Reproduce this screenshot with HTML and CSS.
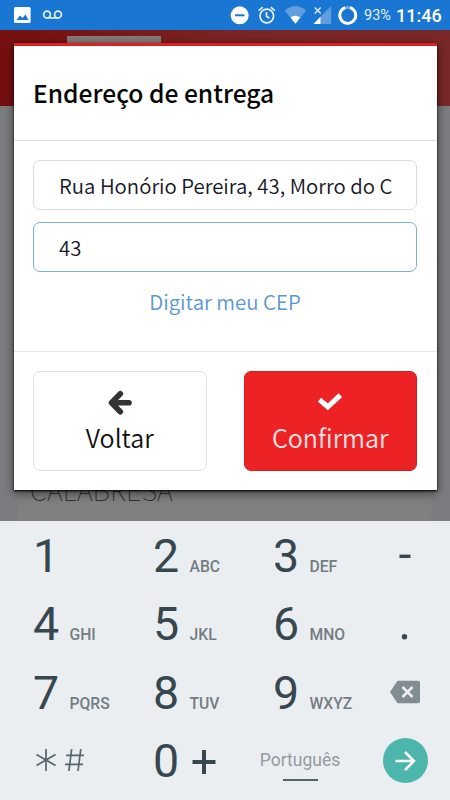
FILE: index.html
```html
<!DOCTYPE html>
<html lang="pt-BR">
<head>
  <meta charset="UTF-8" />
  <meta name="viewport" content="width=device-width, initial-scale=1.0"/>
  <title>Endereço de entrega</title>
  <link rel="stylesheet" href="styles.css">
</head>
<body>
  <div class="status-bar">
    <svg class="status-left" width="70" height="30" viewBox="0 0 70 30">
      <rect x="14" y="7" width="16.600" height="16" rx="1.500" fill="#fff"/>
      <path d="M16.500 20l3.500-4.500 2.500 2.500 3-3.500 3 5.500z" fill="#1976d2"/>
      <g fill="none" stroke="#e4effa" stroke-width="1.700">
        <circle cx="47" cy="14.500" r="3.400"/>
        <circle cx="58" cy="14.500" r="3.400"/>
        <path d="M47 17.900h11"/>
      </g>
    </svg>
    <svg class="status-icons" width="135" height="30" viewBox="225 0 135 30">
      <circle cx="239.700" cy="15.300" r="9" fill="#fff"/>
      <path d="M235 15.300h9.500" stroke="#1976d2" stroke-width="2"/>
      <g fill="none" stroke="#e8f1fb" stroke-width="1.700">
        <circle cx="266.800" cy="16" r="6.800"/>
        <path d="M266.500 12v4.300l3 2M258.700 10.700l4-3.500M274.800 10.700l-4-3.500"/>
      </g>
      <path d="M284.700 10.500Q295.400 1.500 306.200 10.500L295.400 23.800z" fill="#629fdf"/>
      <path d="M290.500 17.500Q295.400 13.800 300.300 17.500L295.400 23.800z" fill="#fff"/>
      <path d="M331.200 6v18H313.500z" fill="#5f9ddd"/>
      <path d="M320.500 16.800V24h-7z" fill="#fff"/>
      <path d="M314.700 7.500l6 6M320.700 7.500l-6 6" stroke="#e8f1fb" stroke-width="1.300"/>
      <circle cx="347.800" cy="15.300" r="8" fill="none" stroke="#75abe2" stroke-width="2.800"/>
      <path d="M350 7.600A8 8 0 1 1 345.200 7.700" fill="none" stroke="#fff" stroke-width="2.800"/>
    </svg>
    <span class="battery">93%</span>
    <span class="clock">11:46</span>
  </div>

  <div class="page">
    <div class="page-header"><div class="page-logo"></div></div>
    <div class="page-content">
      <div class="product">CALABRESA</div>
    </div>

    <div class="modal">
      <div class="modal-header"><h2>Endereço de entrega</h2></div>
      <div class="modal-body">
        <div class="field"><span class="address">Rua Honório Pereira, 43, Morro do C</span></div>
        <div class="field focused"><span class="number">43</span></div>
        <a class="cep-link" href="#"><span>Digitar meu CEP</span></a>
      </div>
      <div class="modal-footer">
        <button class="btn btn-back">
          <svg width="24" height="26" viewBox="0 0 24 26">
            <path d="M12.800 4.300L4 13.300l8.800 9M5 13.300h16.500" fill="none" stroke="#333" stroke-width="5.600" stroke-linecap="round" stroke-linejoin="round" transform="translate(-.5 .5)"/>
          </svg>
          <span>Voltar</span>
        </button>
        <button class="btn btn-confirm">
          <svg width="24" height="26" viewBox="0 0 24 26">
            <path d="M2.500 12.300L9.500 18.300 21.500 7.300" fill="none" stroke="#fff" stroke-width="5.600" stroke-linecap="square"  transform="translate(1.200 1.300) scale(.9)"/>
          </svg>
          <span>Confirmar</span>
        </button>
      </div>
    </div>
  </div>

  <div class="keypad">
    <div class="key"><b>1</b></div>
    <div class="key"><b>2</b><i>ABC</i></div>
    <div class="key"><b>3</b><i>DEF</i></div>
    <div class="key side"><svg width="12" height="46" viewBox="0 0 12 46"><path d="M.5 24.300h11" stroke="#37474f" stroke-width="3.400"/></svg></div>

    <div class="key"><b>4</b><i>GHI</i></div>
    <div class="key"><b>5</b><i>JKL</i></div>
    <div class="key"><b>6</b><i>MNO</i></div>
    <div class="key side"><svg width="12" height="46" viewBox="0 0 12 46"><circle cx="5.500" cy="36.800" r="2.700" fill="#37474f"/></svg></div>

    <div class="key"><b>7</b><i>PQRS</i></div>
    <div class="key"><b>8</b><i>TUV</i></div>
    <div class="key"><b>9</b><i>WXYZ</i></div>
    <div class="key side">
      <svg width="30" height="24" viewBox="0 0 30 24">
        <path d="M7.500.800H28a2 2 0 0 1 2 2v18.400a2 2 0 0 1-2 2H7.500L0 12z" fill="#818d93"/>
        <path d="M12.500 7l10 10M22.500 7l-10 10" stroke="#eceff1" stroke-width="2.500"/>
      </svg>
    </div>

    <div class="key symbols">
      <svg width="50" height="24" viewBox="0 0 50 24">
        <g fill="none" stroke="#56656c" stroke-width="1.700">
          <path d="M10 0v22M.5 5.500l19 11M19.500 5.500l-19 11"/>
          <path d="M35.700 0l-2.800 22M44.800 0L42 22M30 6.300h18M29 15.300h18"/>
        </g>
      </svg>
    </div>
    <div class="key zero"><b>0</b><svg width="24" height="24" viewBox="0 0 24 24"><path d="M12 0v24M.5 12h23" stroke="#37474f" stroke-width="4"/></svg></div>
    <div class="key language"><span>Português</span></div>
    <div class="key side">
      <div class="go">
        <svg width="22" height="22" viewBox="0 0 22 22"><path d="M1.500 11h18M11 2l9 9-9 9" fill="none" stroke="#fff" stroke-width="2.500"/></svg>
      </div>
    </div>
  </div>
</body>
</html>
```

FILE: styles.css
```css
* { box-sizing: border-box; }

body {
  margin: 0;
  width: 450px;
  height: 800px;
  overflow: hidden;
  font-family: 'Noto Sans CJK SC', 'Noto Sans', sans-serif;
}

.status-bar {
  height: 30px;
  display: flex;
  align-items: center;
  background: #1976d2;
  color: #fff;
  font-family: Roboto, sans-serif;
}

.status-icons {
  margin-left: 155px;
}

.battery {
  margin-left: 4px;
  width: 32px;
  font-size: 14.5px;
  color: #e3eefa;
}

.clock {
  font-size: 18px;
  font-weight: 500;
}

.page {
  position: relative;
  height: 490.5px;
  overflow: hidden;
  background: #7b7d80;
}

.page-header {
  height: 76px;
  padding: 6px 0 0 67px;
  background: linear-gradient(to right, #760f10, #7a2425 50%, #7a2829);
}

.page-logo {
  width: 94px;
  height: 20px;
  background: #837b79;
}

.page-content {
  height: 415px;
  margin: 0 19px 0 18px;
  padding: 365px 0 0 12px;
  background: #808080;
}

.product {
  color: #303030;
  font-size: 27.400px;
  line-height: 36px;
  font-weight: 100;
}

/* sits over the dimmed page */
.modal {
  position: absolute;
  top: 12.500px;
  left: 13.500px;
  width: 423px;
  height: 447.500px;
  background: #fff;
  border-top: 3.500px solid #e02020;
  box-shadow: 0 1px 2px #000, 0 3px 10px rgba(0,0,0,0.55);
}

.modal-header {
  height: 95px;
  padding: 26px 19.500px 0;
  border-bottom: 1px solid #dde1e5;
}

.modal-header h2 {
  margin: 0;
  font-size: 24.600px;
  line-height: 40px;
  font-weight: 500;
  color: #050505;
}

.modal-body {
  height: 211px;
  padding: 19px 19.500px 0;
  border-bottom: 1px solid #e5e7ea;
}

.field {
  height: 50px;
  margin-bottom: 12.500px;
  padding: 0 25px 0;
  border: 1px solid #d6dce5;
  border-radius: 7px;
  font-size: 20.350px;
  line-height: 48px;
  white-space: nowrap;
  color: #17171f;
  font-weight: 350;
}

.field.focused {
  border: 1.500px solid #79b0d8;
}

.cep-link {
  display: block;
  text-align: center;
  font-size: 20.400px;
  line-height: 32px;
  font-weight: 350;
  text-decoration: none;
  color: #5b97d0;
}

.modal-footer {
  display: flex;
  justify-content: space-between;
  padding: 19px 19.500px;
}

.btn {
  width: 173.500px;
  height: 100px;
  display: flex;
  flex-direction: column;
  align-items: center;
  padding: 17px 0 0;
  border: 1px solid #e2e2e2;
  border-radius: 7px;
  background: #fff;
  color: #111;
  font-family: inherit;
  font-size: 25px;
  line-height: 44px;
  font-weight: 350;
}

.btn-confirm {
  background: #ed2224;
  border-color: #d51e20;
  color: #ffe5e5;
}

.keypad {
  height: 279.500px;
  display: grid;
  grid-template-columns: 120px 120px 120px 90px;
  grid-template-rows: repeat(4, 68.600px);
  background: #eaeef1;
  font-family: Roboto, sans-serif;
  color: #37474f;
}

.key {
  display: flex;
  align-items: baseline;
  padding: 0 0 0 33px;
}

.key b {
  width: 36.500px;
  font-size: 46.500px;
  line-height: 70px;
  font-weight: 400;
}

.key i {
  font-style: normal;
  font-size: 15.700px;
  font-weight: 500;
  color: #737d82;
}

.key.side {
  align-items: center;
  justify-content: center;
  padding: 0;
}

.key.symbols {
  align-items: center;
  padding: 0 0 0 36px;
}

.key.zero {
  align-items: center;
}

.key.zero svg {
  margin: 2px 0 0 2px;
}

.key.language {
  flex-direction: column;
  align-items: center;
  padding: 20px 0 0;
  font-size: 17.500px;
  line-height: 28px;
  color: #939b9f;
}

.key.language::after {
  content: "";
  width: 35px;
  height: 2px;
  margin-top: 5px;
  background: #56656c;
}

.go {
  width: 45px;
  height: 45px;
  display: flex;
  align-items: center;
  justify-content: center;
  border-radius: 50%;
  background: #4db6ac;
}
```
